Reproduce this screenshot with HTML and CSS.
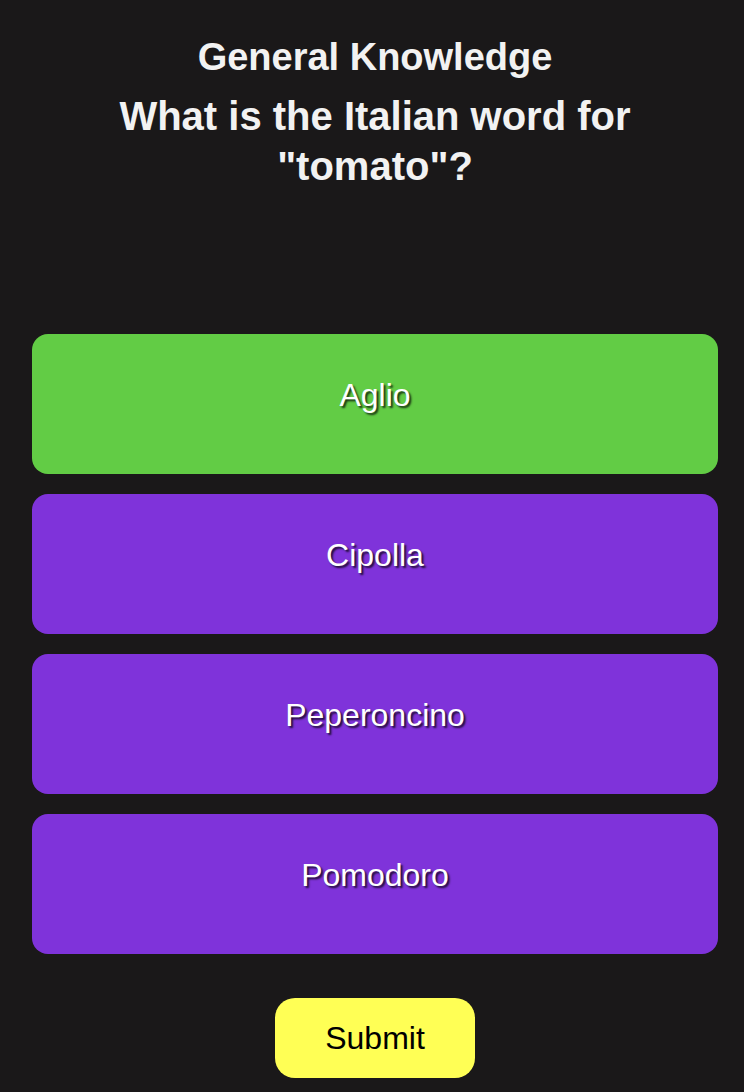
FILE: index.html
```html
<!DOCTYPE html>
<html>
<head>
<meta charset="utf-8">
<link rel="stylesheet" href="styles.css">
</head>
<body>
<main class="quiz">
  <header class="head">
    <h1 class="category">General Knowledge</h1>
    <h2 class="question">What is the Italian word for<br>"tomato"?</h2>
  </header>
  <div class="answers">
    <button class="answer selected">Aglio</button>
    <button class="answer">Cipolla</button>
    <button class="answer">Peperoncino</button>
    <button class="answer">Pomodoro</button>
  </div>
  <div class="actions">
    <button class="submit">Submit</button>
  </div>
</main>
</body>
</html>
```
FILE: styles.css
```css
html, body {
  margin: 0;
  padding: 0;
  background: #1a1819;
}
body {
  width: 744px;
  height: 1092px;
  overflow: hidden;
  font-family: "Liberation Sans", Arial, sans-serif;
}
.quiz {
  display: flex;
  flex-direction: column;
  padding: 35px 26px 0 32px;
}
.head {
  display: flex;
  flex-direction: column;
  align-items: center;
  text-align: center;
  color: #f2f2f2;
}
.category {
  margin: 0;
  font-size: 38px;
  line-height: 44px;
  font-weight: bold;
}
.question {
  margin: 12px 0 0;
  font-size: 40px;
  line-height: 50px;
  font-weight: bold;
}
.answers {
  margin-top: 143px;
  display: flex;
  flex-direction: column;
  gap: 20px;
}
.answer {
  height: 140px;
  border: none;
  border-radius: 16px;
  background: #7f33da;
  color: #ffffff;
  font-family: inherit;
  font-size: 32px;
  line-height: 36px;
  padding: 43px 0 0;
  display: flex;
  justify-content: center;
  align-items: flex-start;
  text-shadow: 2px 2px 2px rgba(0, 0, 0, 0.75);
}
.answer.selected {
  background: #62cc45;
}
.actions {
  margin-top: 44px;
  display: flex;
  justify-content: center;
}
.submit {
  width: 200px;
  height: 80px;
  border: none;
  border-radius: 20px;
  background: #ffff55;
  color: #000;
  font-family: inherit;
  font-size: 32px;
  padding: 0;
}
```
